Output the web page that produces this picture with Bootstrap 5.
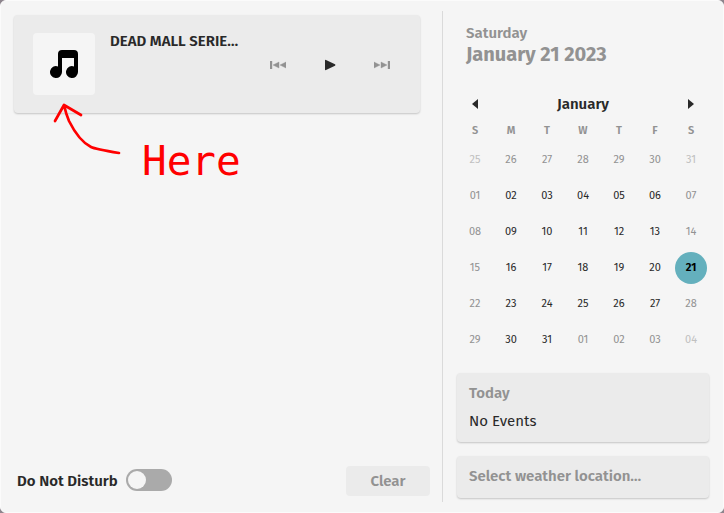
<!DOCTYPE html>
<html lang="en">
<head>
<meta charset="utf-8">
<meta name="viewport" content="width=device-width, initial-scale=1">
<title>Notifications and calendar</title>
<link href="https://cdn.jsdelivr.net/npm/bootstrap@5.3.0/dist/css/bootstrap.min.css" rel="stylesheet">
<style>
  body { font-family: "Fira Sans", "Noto Sans", sans-serif; font-size: 15px; line-height: 20px; color: #292929; background: #8d858d; }
  .panel { background: #f5f5f5; border: 1px solid #fbfbfb; border-radius: 6px; padding: 10px 14px 10px 13px; }
  .messages { padding: 4px 12px 6px 0; border-right: 1px solid #dadada; }
  .side { flex: 0 0 252px; margin-left: 14px; }
  .tile { background: #ebebeb; border-radius: 4px; box-shadow: 0 1px 2px rgba(0,0,0,.2); }
  .player { padding: 18px 12px 18px 19px; margin-right: 10px; }
  .art { width: 62px; height: 62px; background: #f5f5f5; border-radius: 4px; }
  .track { width: 130px; margin-left: 15px; line-height: 16px; }
  .heavy, .heavy-title { font-weight: 600; }
  .heavy { font-size: 15px; }
  .heavy-title { font-size: 20px; line-height: 22px; font-weight: 700; }
  .faded { color: #929292; }
  .controls button { width: 52px; height: 30px; }
  .plain { border: 0; padding: 0; background: transparent; }
  .switch-row { padding-left: 3px; }
  .toggle.form-check-input { width: 46px; height: 22px; border: 0; background-color: #aaa; background-size: 22px; --bs-form-switch-bg: url("data:image/svg+xml,%3csvg xmlns='http://www.w3.org/2000/svg' viewBox='0 0 22 22'%3e%3ccircle cx='11' cy='11' r='9' fill='%23f5f5f5'/%3e%3c/svg%3e"); }
  .clear { width: 84px; height: 30px; background: #ebebeb; border: 0; border-radius: 4px; padding: 0; }
  .date { padding: 12px 0 0 9px; }
  .month { margin-top: 27px; height: 24px; }
  .month button { width: 36px; height: 24px; }
  .days { table-layout: fixed; font-size: 11px; line-height: 16px; text-align: center; }
  .days th { height: 26px; padding: 4px 0 0; font-weight: 600; color: #929292; }
  .days td { height: 36px; padding: 0; }
  .days .off { color: #929292; }
  .days .far { color: #c0c0c0; }
  .today { width: 32px; height: 32px; background: #64b0bd; color: #000; font-weight: 700; }
  .events { padding: 10px 12px 11px; margin-top: 15px; }
  .weather { padding: 10px 12px 12px; margin: 14px 0 3px; text-align: left; }
  .arrow { position: absolute; left: 48px; top: 98px; pointer-events: none; }
  .note { position: absolute; left: 141px; top: 135px; font: 41px/50px "DejaVu Sans Mono", monospace; color: #f00; }
</style>
</head>
<body>
<main class="panel d-flex min-vh-100 position-relative">
  <section class="messages d-flex flex-column flex-grow-1" aria-label="Notifications">
    <article class="tile player d-flex">
      <div class="art d-flex align-items-center justify-content-center flex-shrink-0">
        <svg width="30" height="30" viewBox="0 0 30 30" aria-hidden="true"><path d="M9 5Q9 1 13 1H25Q29 1 29 5V23A6 6 0 1 1 25 17.4V9H13V23A6 6 0 1 1 9 17.4Z"/></svg>
      </div>
      <div class="track heavy text-nowrap flex-shrink-0">DEAD MALL SERIE…</div>
      <div class="controls d-flex align-self-center ms-auto">
        <button class="plain faded" aria-label="Previous"><svg width="16" height="8" viewBox="0 0 16 8" fill="currentColor"><path d="M0 0h2v8H0zM9 1v6L3 4zM16 1v6l-6-3z" stroke="currentColor" stroke-width=".4"/></svg></button>
        <button class="plain" aria-label="Play"><svg width="12" height="12" viewBox="0 0 12 12" fill="#292929"><path d="M1 1.5Q1 .5 2 1L11 5.3Q12 6 11 6.7L2 11Q1 11.5 1 10.5Z"/></svg></button>
        <button class="plain faded" aria-label="Next"><svg width="16" height="8" viewBox="0 0 16 8" fill="currentColor"><path d="M14 0h2v8h-2zM0 1v6l6-3zM7 1v6l6-3z" stroke="currentColor" stroke-width=".4"/></svg></button>
      </div>
    </article>
    <div class="d-flex align-items-center mt-auto">
      <div class="switch-row d-flex align-items-center">
        <label class="heavy me-2" for="dnd">Do Not Disturb</label>
        <div class="form-check form-switch d-flex p-0 m-0">
          <input class="toggle form-check-input m-0" type="checkbox" role="switch" id="dnd">
        </div>
      </div>
      <button class="clear heavy faded ms-auto">Clear</button>
    </div>
  </section>

  <aside class="side d-flex flex-column">
    <header class="date faded">
      <div class="heavy">Saturday</div>
      <h1 class="heavy-title m-0">January 21 2023</h1>
    </header>
    <div class="month d-flex align-items-center justify-content-between">
      <button class="plain d-flex align-items-center justify-content-center" aria-label="Previous month"><svg width="6" height="10" viewBox="0 0 6 10"><path d="M6 0v10L0 5z" fill="#292929"/></svg></button>
      <span class="heavy">January</span>
      <button class="plain d-flex align-items-center justify-content-center" aria-label="Next month"><svg width="6" height="10" viewBox="0 0 6 10"><path d="M0 0v10l6-5z" fill="#292929"/></svg></button>
    </div>
    <table class="days w-100">
      <thead><tr><th>S</th><th>M</th><th>T</th><th>W</th><th>T</th><th>F</th><th>S</th></tr></thead>
      <tbody>
        <tr><td class="far">25</td><td class="off">26</td><td class="off">27</td><td class="off">28</td><td class="off">29</td><td class="off">30</td><td class="far">31</td></tr>
        <tr><td class="off">01</td><td>02</td><td>03</td><td>04</td><td>05</td><td>06</td><td class="off">07</td></tr>
        <tr><td class="off">08</td><td>09</td><td>10</td><td>11</td><td>12</td><td>13</td><td class="off">14</td></tr>
        <tr><td class="off">15</td><td>16</td><td>17</td><td>18</td><td>19</td><td>20</td><td><span class="today rounded-circle d-flex align-items-center justify-content-center mx-auto">21</span></td></tr>
        <tr><td class="off">22</td><td>23</td><td>24</td><td>25</td><td>26</td><td>27</td><td class="off">28</td></tr>
        <tr><td class="off">29</td><td>30</td><td>31</td><td class="off">01</td><td class="off">02</td><td class="off">03</td><td class="far">04</td></tr>
      </tbody>
    </table>
    <section class="tile events d-flex flex-column gap-2">
      <div class="heavy faded">Today</div>
      <div>No Events</div>
    </section>
    <button class="tile weather heavy faded border-0">Select weather location…</button>
  </aside>

  <svg class="arrow" width="76" height="60" viewBox="0 0 76 60" fill="none" stroke="#f00" stroke-width="2.7" stroke-linecap="round" stroke-linejoin="round" aria-hidden="true"><path d="M6 22L15 6L32 16M15 6Q17 15 20 22Q30 42 42 48Q46 50 70 54"/></svg>
  <span class="note">Here</span>
</main>
<script src="https://cdn.jsdelivr.net/npm/bootstrap@5.3.0/dist/js/bootstrap.bundle.min.js"></script>
</body>
</html>
